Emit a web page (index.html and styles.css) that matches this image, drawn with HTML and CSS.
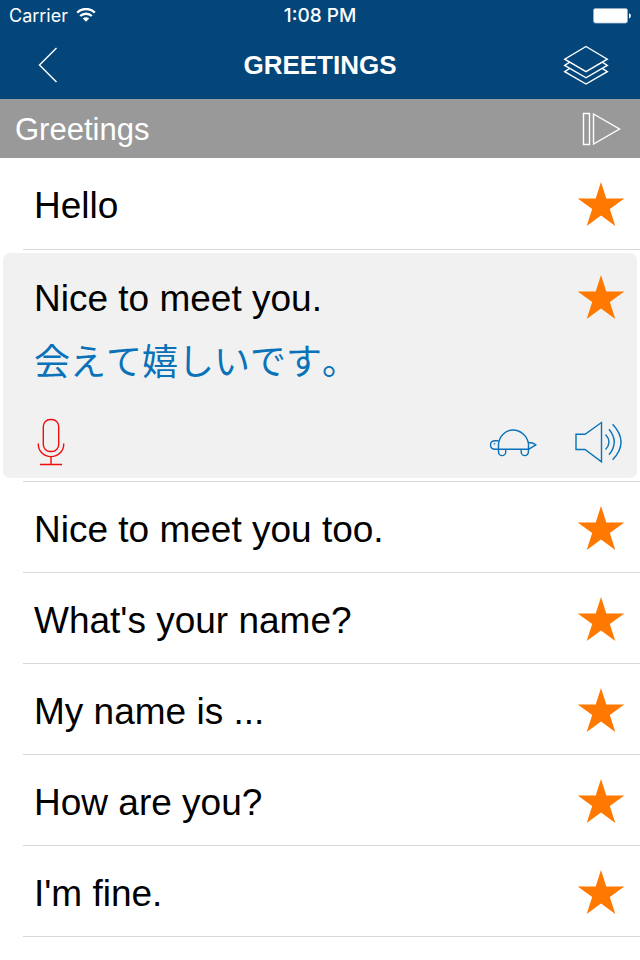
FILE: index.html
```html
<!DOCTYPE html>
<html lang="en">
<head>
  <meta charset="UTF-8">
  <meta name="viewport" content="width=device-width, initial-scale=1">
  <title>Greetings</title>
  <link rel="stylesheet" href="styles.css">
</head>
<body>

  <!-- star shape shared by all rows -->
  <svg class="defs" aria-hidden="true">
    <symbol id="star" viewBox="0 0 48 46">
      <path d="M24 1L29.3 17.4H47.3L32.8 27.9L38.3 45L24 34.6L9.7 45L15.2 27.9L.7 17.4H18.7Z"/>
    </symbol>
  </svg>

  <header>
    <div class="status-bar">
      <div class="carrier">
        <span>Carrier</span>
        <svg width="20" height="16" viewBox="0 0 20 16" aria-hidden="true">
          <path d="M1.2 4.6A12.6 12.6 0 0 1 18.8 4.6M4.2 8A8.4 8.4 0 0 1 15.8 8" fill="none" stroke="#fff" stroke-width="2.4"/>
          <path d="M10 13.8L6.8 10.5A4.6 4.6 0 0 1 13.2 10.5Z" fill="#fff"/>
        </svg>
      </div>
      <time>1:08 PM</time>
      <svg class="battery" width="38" height="16" viewBox="0 0 38 16" aria-hidden="true">
        <rect x=".5" y=".5" width="34" height="14.5" rx="2" fill="#fff" stroke="#8fabc4"/>
        <rect x="1.5" y="1" width="32" height="13.5" rx="1" fill="#fff"/>
        <path d="M36 5.2Q38 6 38 7.8Q38 9.6 36 10.4Z" fill="#fff"/>
      </svg>
    </div>
    <nav class="nav-bar">
      <button type="button" class="back" aria-label="Back">
        <svg width="20" height="36" viewBox="0 0 20 36">
          <path d="M18.5 1L1.5 18L18.5 35"/>
        </svg>
      </button>
      <h1>GREETINGS</h1>
      <button type="button" class="cards" aria-label="Cards">
        <svg width="46" height="40" viewBox="0 0 46 40">
          <path d="M23 1.5L44.3 14.2L23 26.6L1.7 14.2Z"/>
          <path d="M6.7 17.2L1.7 20.4L23 32.8L44.3 20.4L39.3 17.2"/>
          <path d="M6.7 23.4L1.7 26.6L23 39L44.3 26.6L39.3 23.4"/>
        </svg>
      </button>
    </nav>
  </header>

  <div class="section-bar">
    <h2>Greetings</h2>
    <button type="button" aria-label="Play all">
      <svg width="40" height="34" viewBox="0 0 40 34">
        <path d="M2.5 1.5H8.5V32.5H2.5ZM12.5 2L38.5 17L12.5 32Z"/>
      </svg>
    </button>
  </div>

  <ul class="phrases">
    <li>
      <div class="phrase">
        <span>Hello</span>
        <button type="button" class="star" aria-label="Favorite"><svg><use href="#star"/></svg></button>
      </div>
    </li>
    <li class="open">
      <div class="card">
        <div class="phrase">
          <span>Nice to meet you.</span>
          <button type="button" class="star" aria-label="Favorite"><svg><use href="#star"/></svg></button>
        </div>
        <p class="translation" lang="ja">会えて嬉しいです。</p>
        <div class="actions">
          <button type="button" class="record" aria-label="Record">
            <svg width="28" height="48" viewBox="0 0 28 48">
              <rect x="6.3" y="1.5" width="15.4" height="32" rx="7"/>
              <path d="M1.3 25.5V26.5A12.7 12.1 0 0 0 26.7 26.5V25.5M14 38.5V46.5M3 46.5H25"/>
            </svg>
          </button>
          <button type="button" aria-label="Play slowly">
            <svg width="48" height="30" viewBox="0 0 48 30">
              <path d="M9.5 22.3V17C10.5 9 16.5 3 24 3S38.5 9 39.5 17V22.3Z"/>
              <path d="M9.5 13.7H6.5Q1.5 13.7 1.5 18Q1.5 22.3 6.5 22.3H9.5M39.5 15.5Q44 15.5 46.8 17.8L39.5 22.3"/>
              <path d="M9.5 22.3V25A3.6 3.6 0 0 0 16.7 25V22.3M32.2 22.3V25A3.6 3.6 0 0 0 39.4 25V22.3M5.5 16.2V17.6"/>
            </svg>
          </button>
          <button type="button" aria-label="Play">
            <svg width="50" height="44" viewBox="0 0 50 44">
              <path d="M2 14.2H11L27.5 2.5V41.8L11 29.5H2Z"/>
              <path d="M31.5 14.5Q38.5 22 31.5 29.5M35 9.2Q45.5 22 35 34.8M38.6 4.2Q55.5 22 38.6 39.8"/>
            </svg>
          </button>
        </div>
      </div>
    </li>
    <li>
      <div class="phrase">
        <span>Nice to meet you too.</span>
        <button type="button" class="star" aria-label="Favorite"><svg><use href="#star"/></svg></button>
      </div>
    </li>
    <li>
      <div class="phrase">
        <span>What's your name?</span>
        <button type="button" class="star" aria-label="Favorite"><svg><use href="#star"/></svg></button>
      </div>
    </li>
    <li>
      <div class="phrase">
        <span>My name is ...</span>
        <button type="button" class="star" aria-label="Favorite"><svg><use href="#star"/></svg></button>
      </div>
    </li>
    <li>
      <div class="phrase">
        <span>How are you?</span>
        <button type="button" class="star" aria-label="Favorite"><svg><use href="#star"/></svg></button>
      </div>
    </li>
    <li>
      <div class="phrase">
        <span>I'm fine.</span>
        <button type="button" class="star" aria-label="Favorite"><svg><use href="#star"/></svg></button>
      </div>
    </li>
  </ul>

</body>
</html>
```
FILE: styles.css
```css
* {
  box-sizing: border-box;
}
body {
  margin: 0;
  background: #fff;
  color: #000;
  font-family: "Liberation Sans", Arial, sans-serif;
}
h1, h2, p, ul {
  margin: 0;
  padding: 0;
}
button {
  display: flex;
  padding: 0;
  border: 0;
  background: none;
  cursor: pointer;
}
button svg {
  fill: none;
  stroke: #fff;
  stroke-width: 1.4;
}
.defs {
  display: none;
}
header {
  background: #04467a;
  color: #fff;
}
.status-bar {
  display: grid;
  grid-template-columns: 1fr auto 1fr;
  align-items: center;
  height: 32px;
  padding: 0 9px;
  font: 500 19px/32px Inter, sans-serif;
}
.carrier {
  display: flex;
  align-items: center;
  gap: 8px;
  font-size: 18px;
  font-weight: 400;
}
.battery {
  justify-self: end;
}
.nav-bar {
  display: grid;
  grid-template-columns: 1fr auto 1fr;
  align-items: center;
  height: 67px;
  padding: 0 31px 2px;
}
.nav-bar h1 {
  font-size: 26px;
  line-height: 32px;
}
.back {
  padding-left: 7px;
}
.cards {
  justify-self: end;
}
.section-bar {
  display: flex;
  align-items: center;
  justify-content: space-between;
  height: 59px;
  padding: 0 19px 0 15px;
  background: #999;
  color: #fff;
}
.section-bar h2 {
  padding-top: 2px;
  font-size: 31px;
  font-weight: 400;
}
.phrases {
  list-style: none;
}
.phrases li {
  margin-left: 23px;
  border-bottom: 1px solid #d9d9d9;
}
.phrases li:first-child {
  padding-bottom: 1px;
}
.phrase {
  display: flex;
  align-items: center;
  justify-content: space-between;
  height: 90px;
  padding: 2px 15px 0 11px;
  font-size: 37px;
}
.phrase span {
  padding-top: 4px;
}
.star svg {
  width: 48px;
  height: 46px;
  fill: #ff7800;
  stroke: none;
}

/* expanded row */
.phrases .open {
  padding: 3px 3px 3px 0;
}
.card {
  margin-left: -20px;
  padding-bottom: 12px;
  border-radius: 7px;
  background: #f1f1f1;
}
.card .phrase {
  height: 86px;
  padding: 2px 12px 0 31px;
}
.translation {
  margin-top: 2px;
  padding-left: 31px;
  color: #0972b9;
  font: 36px/36px "Noto Sans CJK JP", sans-serif;
  font-kerning: none;
}
.actions {
  display: flex;
  align-items: center;
  gap: 37px;
  margin-top: 41px;
  padding: 0 13px 0 34px;
}
.actions svg {
  stroke: #0972b9;
}
.actions .record {
  margin-right: auto;
}
.record svg {
  stroke: #f20d0d;
}
```
